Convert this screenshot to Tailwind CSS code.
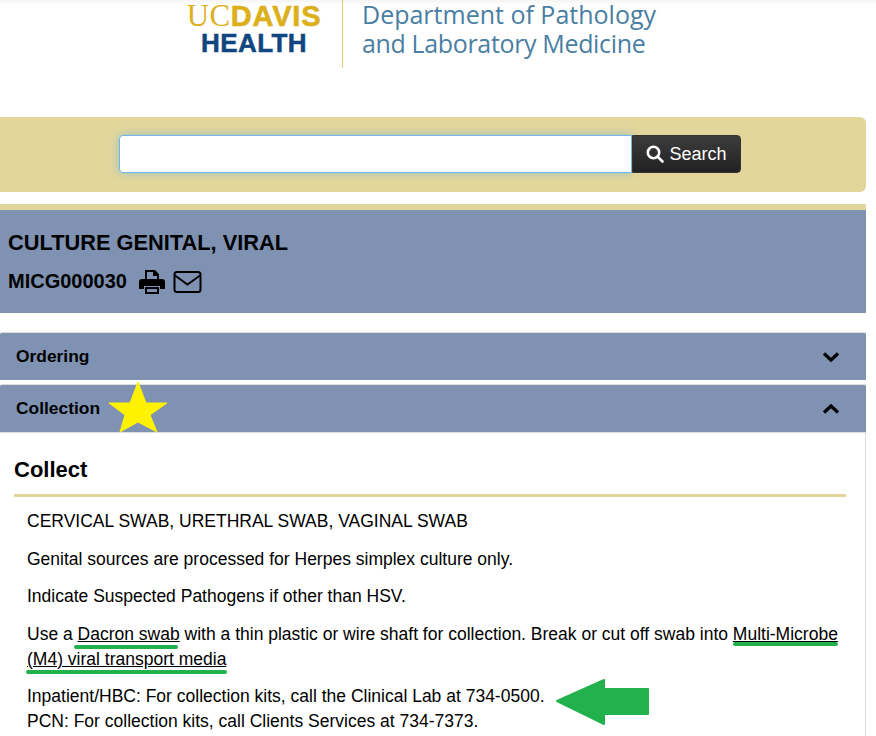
<!DOCTYPE html>
<html lang="en">
<head>
  <meta charset="UTF-8">
  <title>Culture Genital, Viral</title>
  <script src="https://cdn.jsdelivr.net/npm/@tailwindcss/browser@4"></script>
</head>
<body class="bg-white font-['Liberation_Sans',Arial,sans-serif] text-black overflow-hidden">
  <div class="w-[876px] h-[736px] overflow-hidden relative">
    <!-- logo -->
    <header class="h-[117px] flex pl-[187px] bg-gradient-to-b from-[#f4f4f4] to-white to-[5px]">
      <div class="flex h-[68px]">
        <div class="w-[134px] flex flex-col items-center pt-[2px] mr-[21px]">
          <div class="flex items-baseline h-[27px] leading-[27px] text-[#dcb01c] whitespace-nowrap">
            <span class="font-['Liberation_Serif',serif] text-[31px] tracking-[0.5px]">UC</span><span class="font-bold text-[29px] tracking-[0.8px] [-webkit-text-stroke:0.6px_#dcb01c]">DAVIS</span>
          </div>
          <div class="h-[26px] leading-[26px] mt-[1px] text-[#10467f] text-[26px] font-bold tracking-[0.4px] [-webkit-text-stroke:0.5px_#10467f]">HEALTH</div>
        </div>
        <div class="w-[1px] bg-[#e8cd70] h-[68px]"></div>
        <div class="pl-[19px] text-[#4a7ea3] font-['Open_Sans',sans-serif] text-[25px] leading-[29px] whitespace-nowrap">
          <div>Department of Pathology</div>
          <div class="tracking-[-0.35px]">and Laboratory Medicine</div>
        </div>
      </div>
    </header>

    <main class="w-[866px]">
      <!-- search -->
      <section class="h-[75px] bg-[#e2d69b] rounded-r-md flex pt-[18px] pl-[119px]">
        <input type="text" class="w-[513px] h-[38px] bg-white border border-[#74b6e6] rounded-l-[4px] shadow-[0_0_8px_rgba(102,175,233,0.6)] outline-none">
        <button class="w-[109px] h-[38px] rounded-r-[4px] bg-gradient-to-b from-[#3c3c3c] to-[#222222] border border-[#333] text-white text-[18px] flex items-center justify-center gap-[5px]">
          <svg width="18" height="18" viewBox="0 0 18 18" fill="none" stroke="white" stroke-width="2.6"><circle cx="7.5" cy="7.5" r="5.7"/><path d="M11.6 11.6 16.5 16.5" stroke-linecap="round"/></svg>
          Search
        </button>
      </section>

      <!-- test title -->
      <section class="mt-[12px] border-t-[6px] border-[#e2d69b] bg-[#7f92b2] h-[109px] pl-[8px] pt-[20px] font-bold">
        <h1 class="text-[21.8px] leading-[26px]">CULTURE GENITAL, VIRAL</h1>
        <div class="flex items-center mt-[12px] h-[26px]">
          <span class="text-[20px] leading-[26px]">MICG000030</span>
          <svg class="ml-[12px] mt-[1px]" width="26" height="24" viewBox="0 0 26 24" fill="#000"><path d="M6 0h10l4 4v7h-2V6h-4V2H8v9H6z"/><path d="M3 9h20a3 3 0 0 1 3 3v7h-5v-3H5v3H0v-7a3 3 0 0 1 3-3z"/><path d="M6 17h14v7H6zm2 2v3h10v-3z" fill-rule="evenodd"/></svg>
          <svg class="ml-[8px] mt-[2px]" width="29" height="22" viewBox="0 0 28 22" fill="none" stroke="#000" stroke-width="2"><rect x="1" y="1" width="26" height="20" rx="2.5"/><path d="M1.500 4.500 14 13.500 26.500 4.500"/></svg>
        </div>
      </section>

      <!-- accordion -->
      <section class="mt-[19px] h-[48px] bg-[#7f92b2] border-t border-[#ddd] rounded-t-[2px] flex items-center justify-between pl-[16px] pr-[26px] font-bold text-[17.4px]">
        <span>Ordering</span>
        <svg width="18" height="12" viewBox="0 0 18 12" fill="none" stroke="#000" stroke-width="3.200"><path d="M2 2.500 9 9 16 2.500"/></svg>
      </section>
      <section class="mt-[4px] h-[49px] bg-[#7f92b2] border-t border-b border-[#ddd] rounded-t-[2px] flex items-center justify-between pl-[16px] pr-[26px] font-bold text-[17.4px]">
        <span>Collection</span>
        <svg width="18" height="12" viewBox="0 0 18 12" fill="none" stroke="#000" stroke-width="3.200"><path d="M2 9.500 9 3 16 9.500"/></svg>
      </section>

      <!-- collect panel -->
      <section class="border-r border-[#ddd] h-[303px] pl-[14px] pr-[19px] pt-[24px]">
        <h2 class="text-[22px] leading-[26px] font-bold pb-[11px] border-b-[3px] border-[#e2d69b]">Collect</h2>
        <div class="pl-[13px] text-[17.500px] leading-[24px] pt-[12px]">
          <p>CERVICAL SWAB, URETHRAL SWAB, VAGINAL SWAB</p>
          <p class="mt-[14px]">Genital sources are processed for Herpes simplex culture only.</p>
          <p class="mt-[13px]">Indicate Suspected Pathogens if other than HSV.</p>
          <p class="mt-[14px] leading-[25px]">Use a <a href="#" class="underline">Dacron swab</a> with a thin plastic or wire shaft for collection. Break or cut off swab into <a href="#" class="underline">Multi-Microbe (M4) viral transport media</a></p>
          <p class="mt-[12px] leading-[25px]">Inpatient/HBC: For collection kits, call the Clinical Lab at 734-0500.<br>PCN: For collection kits, call Clients Services at 734-7373.</p>
        </div>
      </section>
    </main>

    <!-- annotations drawn over the page -->
    <svg class="absolute top-0 left-0 pointer-events-none" width="876" height="736" viewBox="0 0 876 736">
      <path d="M138 382 146 403 167 403 150 415 157 432 138 422 120 432 125 415 109 403 130 403z" fill="#fff200" stroke="#fff200" stroke-linejoin="round"/>
      <g stroke="#22b14c" stroke-width="4" stroke-linecap="round" fill="none">
        <path d="M76 647H176"/>
        <path d="M735 644H836"/>
        <path d="M28 672H225"/>
      </g>
      <path d="M557 701 604 680V689H648V714H604V724z" fill="#22b14c" stroke="#22b14c" stroke-width="2" stroke-linejoin="round"/>
    </svg>
  </div>
</body>
</html>
